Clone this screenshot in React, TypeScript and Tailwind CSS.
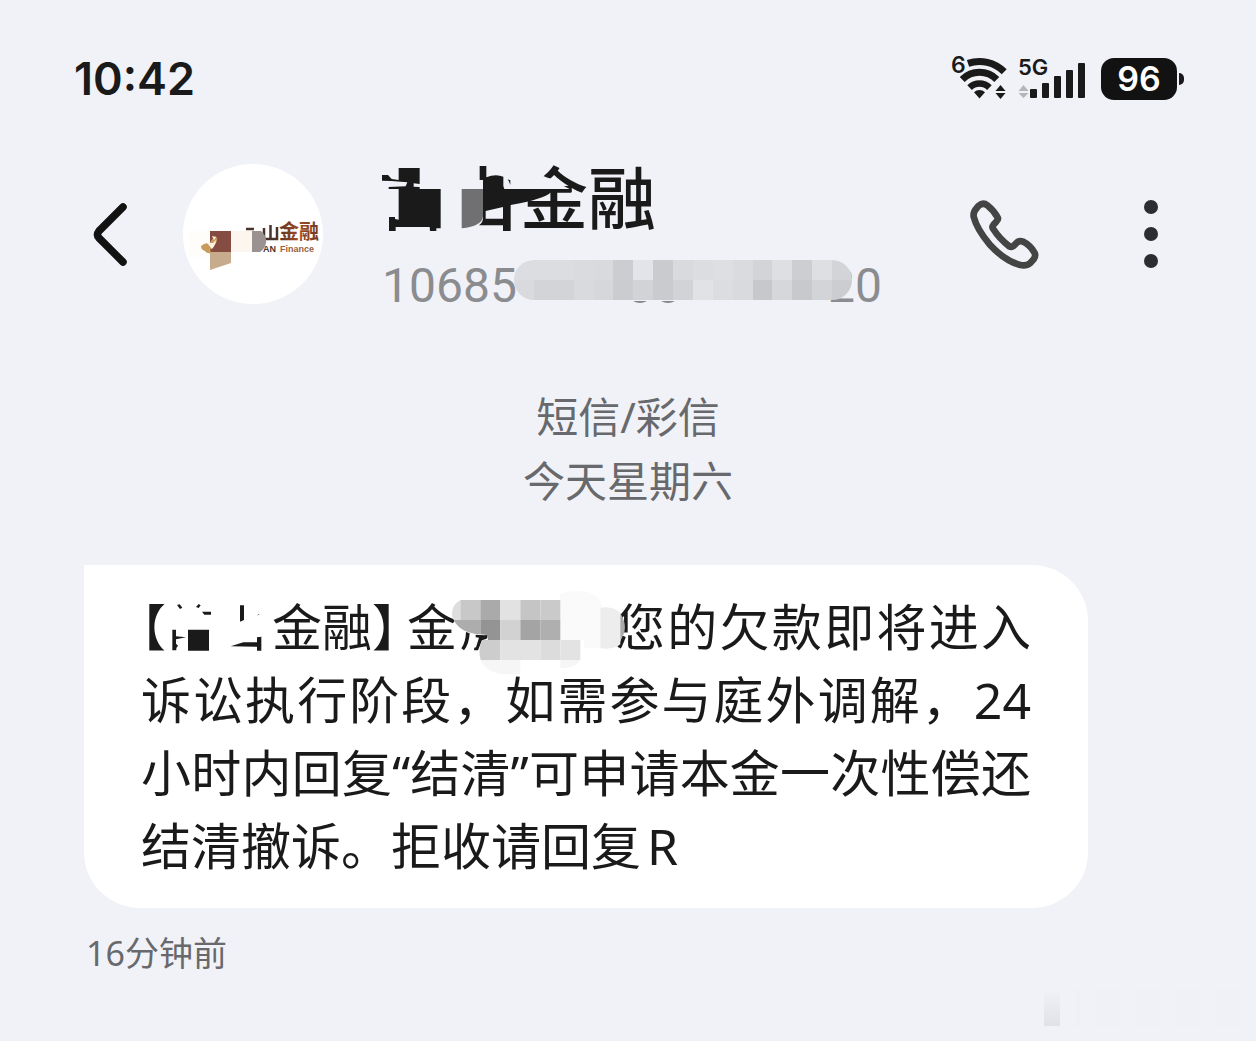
import React from 'react';

const TEXT_FONT = "font-['Noto_Sans','Noto_Sans_CJK_SC',sans-serif]";

const WifiIcon = () => (
    <svg className="w-[58px] h-[46px] shrink-0 overflow-visible" viewBox="0 0 58 46" fill="none" stroke="#191a19">
        <text x="1" y="19" fontSize="23" fontWeight="600" fontFamily="Inter, sans-serif" fill="#191a19" stroke="none">6</text>
        <path strokeWidth="7" d="M18 9.4A35 35 0 0 1 54.2 17.8" />
        <path strokeWidth="7" d="M12.2 25.4A24.5 24.5 0 0 1 46.8 25.4" />
        <path strokeWidth="6.5" d="M19.6 33.6A14 14 0 0 1 39.4 33.6" />
        <path stroke="none" fill="#191a19" d="M29.5 44.5L24 38.3A8 8 0 0 1 35 38.3ZM50.5 31l5 6h-10zM45.5 39h10l-5 6z" />
    </svg>
);

const SignalIcon = () => (
    <svg className="w-[68px] h-[46px] shrink-0 overflow-visible" viewBox="0 0 68 46" fill="#191a19">
        <text x="0" y="21" fontSize="22" fontWeight="600" fontFamily="Inter, sans-serif">5G</text>
        <path fill="#b4b5b8" d="M5.5 31l5 6h-10zM.5 39h10l-5 5z" />
        <rect x="12" y="35" width="7" height="9" rx="1" />
        <rect x="24" y="29" width="7" height="15" rx="1" />
        <rect x="36" y="22" width="7" height="22" rx="1" />
        <rect x="48" y="16" width="7" height="28" rx="1" />
        <rect x="60" y="9" width="7" height="35" rx="1" />
    </svg>
);

const StatusBar = () => (
    <div className="flex items-center justify-between pt-[55px] pl-[74px] pr-[72px] font-[Inter,sans-serif] font-semibold">
        <span className="text-[45px] leading-[48px] text-[#191a19]">10:42</span>
        <div className="flex items-center h-12">
            <div className="flex gap-2.5 pb-1">
                <WifiIcon />
                <SignalIcon />
            </div>
            <div className="ml-[15px] w-[76px] h-[42px] rounded-[13px] bg-[#111211] text-white flex items-center justify-center text-[34px] leading-none">
                96
            </div>
            <div className="ml-0.5 w-[5px] h-3 rounded-r-full bg-[#191a19]" />
        </div>
    </div>
);

const Avatar = () => (
    <svg className="w-[140px] h-[140px] shrink-0" viewBox="0 0 140 140">
        <defs>
            <linearGradient id="brand" x1="0" x2="1">
                <stop offset="0" stopColor="#5f3520" />
                <stop offset="0.5" stopColor="#a04a22" />
                <stop offset="1" stopColor="#6f3a22" />
            </linearGradient>
        </defs>
        <circle cx="70" cy="70" r="70" fill="#fff" />
        <g fill="none" stroke="#4a332b" strokeWidth="2.5">
            <path d="M63 65h8M81 64v11.500M80 75h14V63M87.500 61v14" />
        </g>
        <text x="96" y="75" fontSize="20" fontWeight="700" fontFamily="'Noto Sans CJK SC', sans-serif" fill="url(#brand)">金融</text>
        <text x="80" y="88" fontSize="9" fontWeight="700" fontFamily="'Liberation Sans', sans-serif" fill="#4a332b">AN</text>
        <text x="97" y="88" fontSize="9" fontWeight="700" fontFamily="'Liberation Sans', sans-serif" fill="#9a6040">Finance</text>
        <rect x="6" y="67" width="21" height="26" fill="#fffdf9" />
        <rect x="27" y="67" width="21" height="21" fill="#854c41" />
        <path d="M27 88h21v11l-21 7z" fill="#c6ab8c" />
        <rect x="48" y="67" width="21" height="21" fill="#fdf6ef" />
        <path d="M69 67h9q6 5 5 12q-1 6-6 9h-8z" fill="#9a9190" />
        <path d="M18 82q5-4 8-2q3-5 6-8q4 2 1 7q-3 6-7 7q3 1 2 3q-4 1-6-2q-4-1-4-5z" fill="#c79a5e" />
        <path d="M24 79l5 6q4-5 4-9l-3 3zM29 72l4 1-2 3z" fill="#fff4e4" />
    </svg>
);

// censored first half of the sender name
const TitleSmudge = () => (
    <svg className="absolute left-0 top-0 w-[193px] h-[68px]" viewBox="37 42 579 204" fill="#191a19">
        <path fill="#f1f2f7" d="M440 50L510 50L519 77L534 83L545 86L575 104L600 117H440z" />
        <path d="M87 54H150V102L132 100V110L150 111V117H213V235H200V243H181L180 231H78V243H58V201H76V207L110 214L87 210V117H57V111L108 109L113 97L65 93L35 92V75H55L66 87L87 90z" />
        <path fill="#707073" d="M276 117H340V200Q337 228 276 235z" />
        <path fillRule="evenodd" d="M330 48H350V82Q378 70 401 80V108L404 117H605V128H542Q525 146 423 165V243H400V226H328Q342 215 340 200V90H330zM348 183V206H400V171z" />
        <path d="M414 88l8 3v14q-2-8-8-17z" />
    </svg>
);

const numberTop = ['#dcdde1', '#dcdde1', '#dcdde1', '#dadbdf', '#d9dade', '#cccdd1', '#e3e4e9', '#cacbcf', '#d9dade', '#dcdde1', '#dedfe3', '#dadbdf', '#d3d4d8', '#dedfe3', '#cdced2', '#dedfe3', '#d3d4d8'];
const numberBottom = ['#d9dade', '#d3d4d8', '#d3d4d8', '#d9dade', '#d6d7db', '#cbccd0', '#d2d3d7', '#cacbcf', '#d2d3d7', '#e1e2e6', '#dcdde1', '#d9dade', '#c7c8cc', '#d6d7db', '#c8c9cd', '#d3d4d8', '#cccdd1'];

const NumberMosaic = () => (
    <>
        <div className="absolute left-[132px] top-0 w-[338px] h-10 rounded-full overflow-hidden grid grid-cols-17 grid-rows-2">
            {[...numberTop, ...numberBottom].map((color, idx) => (
                <i key={idx} style={{ backgroundColor: color }} />
            ))}
        </div>
        {/* bottoms of the digits that stick out under the mosaic */}
        <svg className="absolute left-[250px] top-[41px] w-12 h-1" viewBox="0 0 48 4" fill="#85868a">
            <path d="M1 0q7 4 14 0zM29 0q7 4 14 0z" />
        </svg>
    </>
);

const Header = () => (
    <header className="flex items-center pl-[93px] pr-[98px] mt-[61px] h-[140px]">
        <button aria-label="返回" className="shrink-0">
            <svg className="w-9 h-16" viewBox="0 0 36 64" fill="none" stroke="#111211" strokeWidth="7.500" strokeLinecap="round" strokeLinejoin="round">
                <path d="M30 5L6 29Q3 33 6 36L30 60" />
            </svg>
        </button>
        <div className="ml-[54px] shrink-0">
            <Avatar />
        </div>
        <div className="ml-[59px] flex-1 self-start">
            <h1 className={`${TEXT_FONT} relative h-[68px] pl-[138px] text-[68px] leading-[68px] font-medium text-[#191a19]`}>
                金融
                <TitleSmudge />
            </h1>
            <div className="relative mt-7 w-[500px] h-12 flex justify-between font-[Roboto,sans-serif] text-[48px] leading-[52px] text-[#8b8c90]">
                <span>10685</span>
                <span>20</span>
                <NumberMosaic />
            </div>
        </div>
        <button aria-label="拨打电话" className="shrink-0">
            <svg className="w-[69px] h-[69px]" viewBox="60 58 206 206" fill="none" stroke="#434443" strokeWidth="20" strokeLinejoin="round">
                <path d="M80 82L86 75Q99 64 112 74Q132 90 143 111Q145 117 139 122L130 132Q125 138 129 144Q148 174 177 196Q184 200 190 195L200 185Q208 178 218 182Q240 193 253 216Q257 225 250 235L240 246Q228 256 210 252Q165 241 118 190Q80 144 71 108Q69 93 80 82z" />
            </svg>
        </button>
        <button aria-label="更多" className="ml-[105px] shrink-0 flex flex-col gap-[13px]">
            <i className="size-3.5 rounded-full bg-[#2c2d30]" />
            <i className="size-3.5 rounded-full bg-[#2c2d30]" />
            <i className="size-3.5 rounded-full bg-[#2c2d30]" />
        </button>
    </header>
);

// what is left of the two censored characters after the opening bracket
const NameSmudge = () => (
    <svg className="w-[106px] h-[50px] shrink-0" viewBox="111 40 318 150" fill="#191a19">
        <path d="M144 46l8-2 8 10-7 4zM201 52l8-9 6 4-6 8zM219 66h27v9h-20zM130 120h11v20l30 3-30 6v13l6 6-5 7v7h-12zM177 120h63v63h-63zM333 47h12v44l-12 5zM384 77l8-5-3 4zM305 170l38-12h41v-15l13-2v42h-13v-12z" />
    </svg>
);

const MessageMosaic = () => (
    <svg className="absolute left-[311px] -top-px w-[174px] h-[84px]" viewBox="155 15 522 252">
        <path fill="#fff" d="M162 45H480L600 25L660 85L672 128L650 180L540 225L500 250H260L238 210L262 150L200 145L165 110z" />
        <path fill="#191a19" d="M197 141l11 4Q206 178 191 196L183 190Q196 172 197 141zM226 149l26 2 11-1-4 11-14 5-12 30h-12l1-8 5-1 9-29-10-1z" />
        <path fill="#fafafa" d="M480 25Q590 0 606 65H600V190H552V165H480z" />
        <path fill="#dedede" d="M180 45Q155 60 155 85Q155 97 160 105H180z" />
        <path fill="#c8c8c8" d="M180 45h60v60h-60z" />
        <path fill="#aaa" d="M240 45h60v60h-60z" />
        <path fill="#e2e2e2" d="M300 45h60v60h-60z" />
        <path fill="#c5c5c5" d="M360 45h60v60h-60z" />
        <path fill="#cacaca" d="M420 45h60v60h-60z" />
        <path fill="#adadad" d="M160 105H240V148Q180 145 160 105z" />
        <path fill="#949494" d="M240 105h60v60h-37l-3-15-20-2z" />
        <path fill="#d2d2d2" d="M300 105h60v60h-60z" />
        <path fill="#a4a4a4" d="M360 105h60v60h-60z" />
        <path fill="#afafaf" d="M420 105h60v60h-60z" />
        <path fill="#cdcdcd" d="M245 165H300V225H241Q232 195 245 165z" />
        <path fill="#e3e3e3" d="M300 165h120v60h-120z" />
        <path fill="#dcdcdc" d="M420 165h60v60h-60z" />
        <path fill="#e3e3e3" d="M480 165h60v60h-60z" />
        <path fill="#f6f6f6" d="M241 225H300V267Q255 260 241 225zM300 225h60v43h-60zM480 225h60q-15 25-60 25z" />
        <path fill="#ededed" d="M600 68Q640 62 660 85V178Q640 195 600 190z" />
        <path fill="#aaa" d="M660 85Q687 128 660 165z" />
    </svg>
);

const Message = () => (
    <div className="mx-[84px] max-w-[1004px] bg-white rounded-[56px] rounded-tl-none px-[57px] pt-[26px] pb-[25px]">
        <div className={`${TEXT_FONT} text-[50px] leading-[73px] text-[#191a19]`}>
            <div className="relative flex justify-between">
                <div className="flex items-center">
                    <span className="[font-feature-settings:'halt']">【</span>
                    <NameSmudge />
                    <span className="[font-feature-settings:'halt']">金融】</span>
                    <span className="ml-2.5">金</span>
                </div>
                <span className="w-[416px] [text-align-last:justify]">您的欠款即将进入</span>
                <MessageMosaic />
            </div>
            <p className="[text-align-last:justify]">诉讼执行阶段，如需参与庭外调解，24</p>
            <p className="[text-align-last:justify]">小时内回复“结清”可申请本金一次性偿还</p>
            <p>结清撤诉。拒收请回复<span className="ml-1.5">R</span></p>
        </div>
    </div>
);

const App: React.FC = () => {
    return (
        <main className={`${TEXT_FONT} min-h-screen bg-[#f1f2f7] overflow-hidden`}>
            <StatusBar />
            <Header />
            <div className="mt-[81px] text-center text-[42px] leading-[64px] text-[#68696c]">
                <p>短信/彩信</p>
                <p>今天星期六</p>
            </div>
            <div className="h-[52px]" />
            <Message />
            <p className="mt-5 ml-[86px] text-[34px] leading-[50px] text-[#68696c]">16分钟前</p>
            <div className="mt-3 mr-2 ml-auto w-[204px] h-9 flex items-stretch gap-4 opacity-60">
                <i className="w-4 bg-linear-to-t from-[#d8d8db] to-[#f1f2f7]" />
                <i className="w-1 bg-[#eeeff4]" />
                <i className="w-6 bg-[#f0f1f6]" />
                <i className="w-6 bg-[#f0f1f6]" />
                <i className="w-6 bg-[#f0f1f6]" />
                <i className="w-6 bg-[#f0f1f6]" />
            </div>
        </main>
    );
};

export default App;
